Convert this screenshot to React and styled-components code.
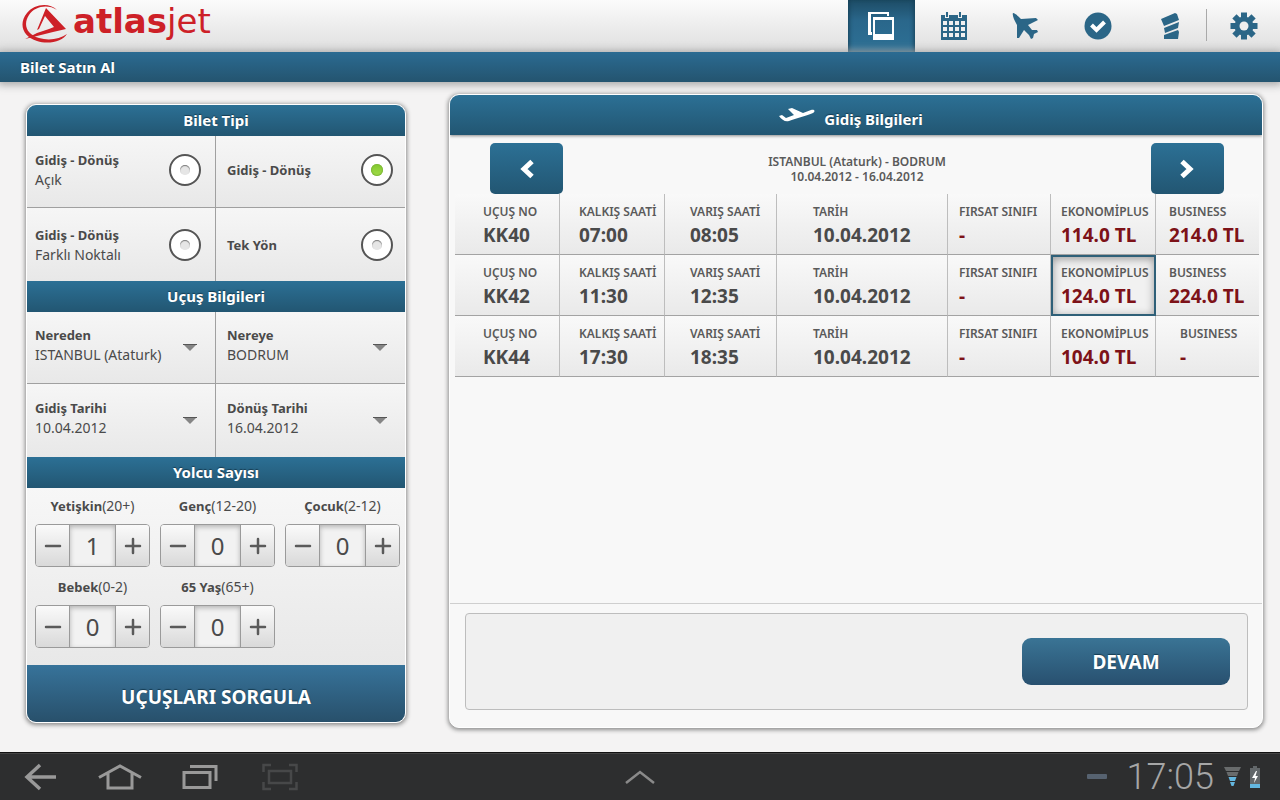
import React, { useState } from 'react';
import styled, { createGlobalStyle, css } from 'styled-components';

const GlobalStyle = createGlobalStyle`
  * { box-sizing: border-box; }
  body {
    margin: 0;
    background: #f4f3f3;
    color: #4a4a4a;
    font-family: 'Noto Sans', 'Open Sans', sans-serif;
    font-size: 14px;
  }
  button, input, select { font: inherit; color: inherit; }
  h1, h2, p { margin: 0; }
`;

const blue = 'linear-gradient(#2c7095, #225672)';

const Page = styled.div`
  min-height: 100vh;
  display: flex;
  flex-direction: column;
`;

const Header = styled.header`
  height: 52px;
  display: flex;
  justify-content: space-between;
  background: linear-gradient(#fbfbfb, #dfdfdf);
`;

const Logo = styled.a`
  display: flex;
  align-items: flex-start;
  padding-left: 20px;
  color: #cd2027;
  text-decoration: none;
`;

const LogoText = styled.span`
  font-family: 'DejaVu Sans', sans-serif;
  font-size: 34px;
  line-height: 42px;
  padding-left: 3px;
`;

const Tabs = styled.nav`
  display: flex;
`;

const Tab = styled.button`
  width: 72px;
  padding: 0;
  border: 0;
  display: flex;
  align-items: center;
  justify-content: center;
  background: none;
  color: #2b6687;
  ${(p) => p.$active && css`
    width: 67px;
    margin-right: 3px;
    color: #fff;
    background: linear-gradient(#1d4c66, #2a678b 40%, #2d7095);
    box-shadow: inset 3px 0 4px -2px #163f55, inset -3px 0 4px -2px #163f55;
  `}
`;

const TabDivider = styled.span`
  width: 1px;
  height: 32px;
  margin: 9px 1px 0 0;
  background: #a9a9a9;
`;

const TitleBar = styled.div`
  height: 30px;
  padding-left: 20px;
  background: linear-gradient(#2b6b92, #24546f);
  box-shadow: 0 1px 8px 2px #a8a8a8;
`;

const PageTitle = styled.h1`
  color: #fff;
  font-size: 15px;
  line-height: 31px;
  text-shadow: 0 -1px 1px #163c52;
`;

const Main = styled.main`
  flex: 1;
  display: flex;
  gap: 43px;
  padding: 12px 17px 24px 26px;
`;

const panel = css`
  border: 1px solid #fff;
  border-radius: 10px;
  overflow: hidden;
  background: #f8f8f8;
  box-shadow: 0 1px 4px 1px #8c8c8c;
`;

const SearchPanel = styled.form`
  ${panel}
  flex: 0 0 380px;
  align-self: flex-start;
  margin-top: 10px;
`;

const ResultsPanel = styled.section`
  ${panel}
  flex: 1;
  display: flex;
  flex-direction: column;
`;

const SectionTitle = styled.h2`
  height: 31px;
  background: ${blue};
  color: #fff;
  font-size: 15px;
  line-height: 31px;
  text-align: center;
  text-shadow: 0 -1px 1px #163c52;
`;

const OptionGrid = styled.div`
  display: grid;
  grid-template-columns: 1fr 1fr;
  grid-template-rows: 72px 73px;
`;

const Cell = styled.label`
  display: flex;
  align-items: center;
  justify-content: space-between;
  padding: 0 ${(p) => (p.$select ? 18 : 14)}px 0 8px;
  background: linear-gradient(#f6f6f6, #e8e8e8);
  border-right: 1px solid #a0a0a0;
  &:nth-child(even) {
    padding-left: 11px;
    padding-right: ${(p) => (p.$select ? 18 : 12)}px;
    border-right: 0;
  }
  &:nth-child(-n + 2) {
    padding-bottom: ${(p) => (p.$select ? 0 : 4)}px;
    border-bottom: 1px solid #a0a0a0;
  }
`;

const CellText = styled.span`
  display: flex;
  flex-direction: column;
  line-height: 20px;
  padding-bottom: ${(p) => (p.$select ? 5 : 0)}px;
`;

const CellLabel = styled.span`
  font-size: 13px;
  font-weight: 700;
`;

const Radio = styled.input`
  appearance: none;
  width: 32px;
  height: 32px;
  margin: 0;
  border: 2px solid #555;
  border-radius: 50%;
  display: grid;
  place-items: center;
  background: #fff;
  &::before {
    content: '';
    width: 10px;
    height: 10px;
    border-radius: 50%;
    background: #e6e6e6;
    box-shadow: inset 0 1px 1px #777;
  }
  &:checked::before {
    width: 12px;
    height: 12px;
    background: linear-gradient(#82c92e, #a2dc4a);
    box-shadow: inset 0 0 1px 1px #7fb83a;
  }
`;

const Select = styled.select`
  appearance: none;
  height: 20px;
  width: 144px;
  padding: 0;
  border: 0;
  background: none;
  line-height: 20px;
`;

const Passengers = styled.div`
  height: 177px;
  display: grid;
  grid-template-columns: repeat(3, 115px);
  justify-content: space-between;
  align-content: start;
  gap: 10px;
  padding: 8px 6px 0 8px;
  background: linear-gradient(#f7f7f7, #e8e8e8);
`;

const Passenger = styled.div`
  display: flex;
  flex-direction: column;
  gap: 8px;
`;

const PassengerLabel = styled.label`
  line-height: 20px;
  text-align: center;
  white-space: nowrap;
`;

const Strong = styled.b`
  font-size: 13px;
`;

const Stepper = styled.div`
  height: 43px;
  display: flex;
  border: 1px solid #9a9a9a;
  border-radius: 4px;
  overflow: hidden;
`;

const StepButton = styled.button`
  width: 33px;
  padding: 0;
  border: 0;
  display: flex;
  align-items: center;
  justify-content: center;
  background: linear-gradient(#fafafa, #d9d9d9);
`;

const Count = styled.input`
  flex: 1;
  min-width: 0;
  padding: 0;
  border: 0;
  border-left: 1px solid #9a9a9a;
  border-right: 1px solid #9a9a9a;
  text-align: center;
  font-size: 24px;
  background: #f2f2f2;
  box-shadow: inset 0 2px 5px #b5b5b5;
`;

const SearchButton = styled.button`
  display: block;
  width: 100%;
  height: 57px;
  padding: 6px 0 0;
  border: 0;
  background: linear-gradient(#37739a, #28506b);
  color: #fff;
  font-size: 19px;
  font-weight: 700;
  text-shadow: 0 -1px 1px #163c52;
`;

const ResultsTitle = styled.h2`
  height: 40px;
  display: flex;
  justify-content: center;
  gap: 9px;
  padding-right: 10px;
  background: ${blue};
  color: #fff;
  font-size: 15px;
  line-height: 48px;
  text-shadow: 0 -1px 1px #163c52;
  box-shadow: 0 1px 3px #888;
`;

const RouteBar = styled.div`
  display: flex;
  justify-content: space-between;
  align-items: center;
  padding: 8px 38px 0 40px;
`;

const Route = styled.div`
  color: #5a5a5a;
  font-size: 12px;
  font-weight: 600;
  line-height: 15px;
  text-align: center;
`;

const RouteLine = styled.p`
  height: 15px;
`;

const ArrowButton = styled.button`
  width: 73px;
  height: 51px;
  padding: 0;
  border: 0;
  border-radius: 5px;
  display: flex;
  align-items: center;
  justify-content: center;
  background: ${blue};
  color: #fff;
`;

const TableArea = styled.div`
  flex: 1;
  padding: 0 3px 0 5px;
  border-bottom: 1px solid #cfcfcf;
`;

const FlightTable = styled.table`
  width: 100%;
  table-layout: fixed;
  border-collapse: separate;
  border-spacing: 0;
`;

const Col = styled.col`
  width: ${(p) => (p.$width ? `${p.$width}px` : 'auto')};
`;

const FlightRow = styled.tr`
  height: 61px;
  background: linear-gradient(#f9f9f9, #e9e9e9);
`;

const FlightCell = styled.td`
  padding: ${(p) => (p.$fare ? 0 : 2)}px 0 0 ${(p) => p.$indent}px;
  border-right: 1px solid #bdbdbd;
  border-bottom: 1px solid #a3a3a3;
  white-space: nowrap;
  &:last-child { border-right: 0; }
  ${(p) => p.$selected && css`
    padding-left: 0;
    border: 0;
  `}
`;

const Fare = styled.button`
  display: block;
  width: 100%;
  height: 60px;
  padding: 2px 0 0;
  border: 0;
  background: none;
  text-align: left;
  color: #7d1218;
  ${(p) => p.$selected && css`
    height: 61px;
    padding: 1px 0 0 8px;
    border: 2px solid #2f6078;
    background: #f1f1f1;
    box-shadow: inset 0 2px 8px #999;
  `}
`;

const Caption = styled.span`
  display: block;
  color: #5a5a5a;
  font-size: 12px;
  font-weight: 600;
  line-height: 20px;
`;

const Value = styled.span`
  display: block;
  font-size: 19px;
  font-weight: 700;
  line-height: 26px;
`;

const ActionBox = styled.div`
  display: flex;
  justify-content: flex-end;
  align-items: center;
  height: 97px;
  margin: 9px 14px 17px 15px;
  padding-right: 17px;
  border: 1px solid #bdbdbd;
  border-radius: 4px;
  background: #f0f0f0;
`;

const ContinueButton = styled.button`
  width: 208px;
  height: 47px;
  border: 0;
  border-radius: 9px;
  background: linear-gradient(#3a7495, #28506f);
  color: #fff;
  font-size: 19px;
  font-weight: 700;
  text-shadow: 0 -1px 1px #163c52;
`;

const SystemBar = styled.footer`
  height: 48px;
  display: grid;
  grid-template-columns: 1fr auto 1fr;
  align-items: center;
  border-top: 1px solid #111;
  background: #2d2e2f;
  box-shadow: inset 0 1px 0 #444;
`;

const SystemGroup = styled.div`
  display: flex;
  align-items: center;
  justify-content: ${(p) => (p.$end ? 'flex-end' : 'flex-start')};
  padding-right: ${(p) => (p.$end ? 20 : 0)}px;
`;

const SystemButton = styled.button`
  width: 80px;
  height: 46px;
  padding: 0;
  border: 0;
  display: flex;
  align-items: center;
  justify-content: center;
  background: none;
`;

const Clock = styled.time`
  padding: 0 10px 0 20px;
  color: #a6a6a6;
  font-family: Roboto, sans-serif;
  font-size: 36px;
  font-weight: 300;
  line-height: 44px;
`;

const StatusIcons = styled.span`
  display: flex;
  align-items: center;
  gap: 9px;
`;

function LogoMark() {
  return (
    <svg width="50" height="46" viewBox="0 0 50 46" aria-hidden="true">
      <path d="M37 10C29 2 14 4 7 13C-2 24 3 37 17 41C29 45 43 41 47 34C40 39 29 41 19 38C6 34 3 24 9 15C15 6 28 4 37 10Z" fill="#cd2027" />
      <path fillRule="evenodd" d="M26 8L46 29L33 32L5 39L17 33L29 29L34 27L25 16L19 29L17 30Z" fill="#cd2027" />
    </svg>
  );
}

function WindowsIcon() {
  return (
    <svg width="27" height="29" viewBox="0 0 27 29" aria-hidden="true">
      <path fillRule="evenodd" fill="currentColor" d="M0 0H21V4H19V2H3V20H4V23H0Z" />
      <path fillRule="evenodd" fill="currentColor" d="M5 5H26V28H5ZM7 8V22H24V8Z" />
    </svg>
  );
}

function CalendarIcon() {
  return (
    <svg width="28" height="28" viewBox="0 0 28 28" aria-hidden="true">
      <path d="M1 3H27V28H1Z" fill="currentColor" />
      <path d="M7 0V6M20 0V6" stroke="#f2f2f2" strokeWidth="4" />
      <path d="M7 0V5M20 0V5" stroke="currentColor" strokeWidth="2" />
      {[9, 15, 21].map((y) => [3, 9, 15, 21].map((x) => (
        <rect key={`${x}-${y}`} x={x} y={y} width="4" height="4" fill="#f0f0f0" />
      )))}
    </svg>
  );
}

function PlaneIcon() {
  return (
    <svg width="28" height="28" viewBox="0 0 28 28" aria-hidden="true">
      <path fill="currentColor" d="M1 1C3 1 6 4 9 7L24 6L26 8L16 13L20 18L25 18L26 20L22 22L21 26L19 27L17 23L12 18L7 26L5 26L5 13C2 8 0 3 1 1Z" />
    </svg>
  );
}

function CheckIcon() {
  return (
    <svg width="28" height="28" viewBox="0 0 28 28" aria-hidden="true">
      <circle cx="14" cy="14" r="13.5" fill="currentColor" />
      <path d="M7.500 13L12.500 18L20.500 10" fill="none" stroke="#fff" strokeWidth="4" />
    </svg>
  );
}

function TicketsIcon() {
  return (
    <svg width="20" height="28" viewBox="0 0 20 28" aria-hidden="true">
      <path fill="currentColor" d="M1 7L15 1L17 2L19 8L4 14ZM4 16L19 10L18 16L5 21ZM4 23L18 18L19 20L18 27L4 27Z" />
    </svg>
  );
}

function GearIcon() {
  return (
    <svg width="28" height="28" viewBox="-14 -14 28 28" aria-hidden="true">
      {[0, 45, 90, 135].map((a) => (
        <rect key={a} x="-3" y="-13.5" width="6" height="27" fill="currentColor" transform={`rotate(${a})`} />
      ))}
      <circle r="9.5" fill="currentColor" />
      <circle r="4.5" fill="#eee" />
    </svg>
  );
}

function TakeoffIcon() {
  return (
    <svg width="36" height="40" viewBox="0 0 36 40" aria-hidden="true">
      <path fill="#fff" d="M0 21L3 20L7 23L15 20L9 14L13 13L24 18L32 15C35 14 37 16 34 18C28 21 17 23 10 26C6 27 3 25 0 21Z" />
    </svg>
  );
}

function Chevron({ right }) {
  return (
    <svg width="16" height="20" viewBox="0 0 16 20" fill="none" stroke="currentColor" strokeWidth="5" aria-hidden="true">
      <path d={right ? 'M3 2.500L11 10L3 17.500' : 'M13 2.500L5 10L13 17.500'} />
    </svg>
  );
}

function DropArrow() {
  return (
    <svg width="14" height="8" viewBox="0 0 14 8" aria-hidden="true">
      <path d="M0 0H14L7 7Z" fill="#858585" />
      <path d="M0 0.5H14" stroke="#555" />
    </svg>
  );
}

function Sign({ plus }) {
  return (
    <svg width="18" height="18" viewBox="0 0 18 18" stroke="#5a5a5a" strokeWidth="2.500" strokeLinecap="round" aria-hidden="true">
      <path d={plus ? 'M2 9H16M9 2V16' : 'M2 9H16'} />
    </svg>
  );
}

const tabs = [
  ['Bilet', WindowsIcon],
  ['Takvim', CalendarIcon],
  ['Uçuşlar', PlaneIcon],
  ['Check-in', CheckIcon],
  ['Biletlerim', TicketsIcon],
];

const ticketTypes = [
  ['Gidiş - Dönüş', 'Açık'],
  ['Gidiş - Dönüş', ''],
  ['Gidiş - Dönüş', 'Farklı Noktalı'],
  ['Tek Yön', ''],
];

const fields = [
  ['Nereden', 'ISTANBUL (Ataturk)'],
  ['Nereye', 'BODRUM'],
  ['Gidiş Tarihi', '10.04.2012'],
  ['Dönüş Tarihi', '16.04.2012'],
];

const passengerTypes = [
  ['Yetişkin', '(20+)', 1],
  ['Genç', '(12-20)', 0],
  ['Çocuk', '(2-12)', 0],
  ['Bebek', '(0-2)', 0],
  ['65 Yaş', '(65+)', 0],
];

const columns = [
  { label: 'UÇUŞ NO', width: 105, indent: 28 },
  { label: 'KALKIŞ SAATİ', width: 105, indent: 19 },
  { label: 'VARIŞ SAATİ', width: 112, indent: 25 },
  { label: 'TARİH', indent: 36 },
  { label: 'FIRSAT SINIFI', width: 103, indent: 11, fare: true },
  { label: 'EKONOMİPLUS', width: 105, indent: 10, fare: true },
  { label: 'BUSINESS', width: 103, indent: 13, emptyIndent: 24, fare: true },
];

const flights = [
  ['KK40', '07:00', '08:05', '10.04.2012', '-', '114.0 TL', '214.0 TL'],
  ['KK42', '11:30', '12:35', '10.04.2012', '-', '124.0 TL', '224.0 TL'],
  ['KK44', '17:30', '18:35', '10.04.2012', '-', '104.0 TL', '-'],
];

function SearchForm() {
  const [type, setType] = useState(1);
  const [counts, setCounts] = useState(passengerTypes.map((p) => p[2]));
  const step = (i, d) => setCounts(counts.map((c, k) => (k === i ? Math.max(0, c + d) : c)));

  return (
    <SearchPanel onSubmit={(e) => e.preventDefault()}>
      <SectionTitle>Bilet Tipi</SectionTitle>
      <OptionGrid>
        {ticketTypes.map(([title, detail], i) => (
          <Cell key={i}>
            <CellText>
              <CellLabel>{title}</CellLabel>
              {detail}
            </CellText>
            <Radio type="radio" name="ticket" checked={type === i} onChange={() => setType(i)} />
          </Cell>
        ))}
      </OptionGrid>
      <SectionTitle>Uçuş Bilgileri</SectionTitle>
      <OptionGrid>
        {fields.map(([label, value]) => (
          <Cell key={label} $select>
            <CellText $select>
              <CellLabel>{label}</CellLabel>
              <Select>
                <option>{value}</option>
              </Select>
            </CellText>
            <DropArrow />
          </Cell>
        ))}
      </OptionGrid>
      <SectionTitle>Yolcu Sayısı</SectionTitle>
      <Passengers>
        {passengerTypes.map(([name, age], i) => (
          <Passenger key={name}>
            <PassengerLabel htmlFor={`count-${i}`}>
              <Strong>{name}</Strong>{age}
            </PassengerLabel>
            <Stepper>
              <StepButton type="button" aria-label={`${name} azalt`} onClick={() => step(i, -1)}><Sign /></StepButton>
              <Count id={`count-${i}`} value={counts[i]} readOnly />
              <StepButton type="button" aria-label={`${name} artır`} onClick={() => step(i, 1)}><Sign plus /></StepButton>
            </Stepper>
          </Passenger>
        ))}
      </Passengers>
      <SearchButton type="submit">UÇUŞLARI SORGULA</SearchButton>
    </SearchPanel>
  );
}

function Results() {
  const [selected, setSelected] = useState('1-5');

  return (
    <ResultsPanel>
      <ResultsTitle><TakeoffIcon />Gidiş Bilgileri</ResultsTitle>
      <RouteBar>
        <ArrowButton aria-label="Önceki gün"><Chevron /></ArrowButton>
        <Route>
          <RouteLine>ISTANBUL (Ataturk) - BODRUM</RouteLine>
          <RouteLine>10.04.2012 - 16.04.2012</RouteLine>
        </Route>
        <ArrowButton aria-label="Sonraki gün"><Chevron right /></ArrowButton>
      </RouteBar>
      <TableArea>
        <FlightTable>
          <colgroup>
            {columns.map((c) => <Col key={c.label} $width={c.width} />)}
          </colgroup>
          <tbody>
            {flights.map((flight, r) => (
              <FlightRow key={flight[0]}>
                {columns.map((c, i) => {
                  const id = `${r}-${i}`;
                  const on = selected === id;
                  const indent = flight[i] === '-' && c.emptyIndent ? c.emptyIndent : c.indent;
                  const content = (
                    <>
                      <Caption>{c.label}</Caption>
                      <Value>{flight[i]}</Value>
                    </>
                  );
                  return (
                    <FlightCell key={c.label} $indent={indent} $fare={c.fare} $selected={on}>
                      {c.fare
                        ? <Fare $selected={on} aria-pressed={on} onClick={() => setSelected(id)}>{content}</Fare>
                        : content}
                    </FlightCell>
                  );
                })}
              </FlightRow>
            ))}
          </tbody>
        </FlightTable>
      </TableArea>
      <ActionBox>
        <ContinueButton>DEVAM</ContinueButton>
      </ActionBox>
    </ResultsPanel>
  );
}

export default function App() {
  return (
    <Page>
      <GlobalStyle />
      <Header>
        <Logo href="#">
          <LogoMark />
          <LogoText><b>atlas</b>jet</LogoText>
        </Logo>
        <Tabs>
          {tabs.map(([name, Icon], i) => (
            <Tab key={name} aria-label={name} $active={i === 0}><Icon /></Tab>
          ))}
          <TabDivider />
          <Tab aria-label="Ayarlar"><GearIcon /></Tab>
        </Tabs>
      </Header>
      <TitleBar><PageTitle>Bilet Satın Al</PageTitle></TitleBar>
      <Main>
        <SearchForm />
        <Results />
      </Main>
      <SystemBar>
        <SystemGroup>
          <SystemButton aria-label="Geri">
            <svg width="32" height="28" viewBox="0 0 32 28" fill="none" stroke="#999" strokeWidth="3.500">
              <path d="M16 2L3 14L16 26M3 14H32" />
            </svg>
          </SystemButton>
          <SystemButton aria-label="Ana ekran">
            <svg width="44" height="28" viewBox="0 0 44 28" fill="none" stroke="#999" strokeWidth="3">
              <path d="M1 14.500L22 3L43 14.500M10 10V25H34V10" />
            </svg>
          </SystemButton>
          <SystemButton aria-label="Son uygulamalar">
            <svg width="36" height="26" viewBox="0 0 36 26" fill="none" stroke="#999" strokeWidth="3">
              <path d="M2 8.500H28V23.500H2ZM8 2.500H34V17" />
            </svg>
          </SystemButton>
          <SystemButton aria-label="Ekran görüntüsü">
            <svg width="36" height="28" viewBox="0 0 36 28" fill="none" stroke="#474849" strokeWidth="2.500">
              <path d="M7 8H29V20H7ZM1.500 9V2H9M27 2H34.500V9M34.500 19V26H27M9 26H1.500V19" />
            </svg>
          </SystemButton>
        </SystemGroup>
        <SystemButton aria-label="Menü">
          <svg width="30" height="16" viewBox="0 0 30 16" fill="none" stroke="#8a8a8a" strokeWidth="2.500">
            <path d="M1 14L15 3L29 14" />
          </svg>
        </SystemButton>
        <SystemGroup $end>
          <svg width="20" height="5" viewBox="0 0 20 5" aria-hidden="true">
            <rect width="20" height="5" rx="1" fill="#566270" />
          </svg>
          <Clock>17:05</Clock>
          <StatusIcons>
            <svg width="17" height="20" viewBox="0 0 17 20" aria-hidden="true">
              <path d="M0 0H17L15 4H2Z M2.500 5H14.500L13 9H4Z" fill="#686b6c" />
              <path d="M4.500 10H12.500L11 14H6Z M6 15H11L9.500 19H7.500Z" fill="#64b7e0" />
            </svg>
            <svg width="10" height="22" viewBox="0 0 10 22" aria-hidden="true">
              <path d="M3 0H7V2H10V18H0V2H3Z" fill="#62676a" />
              <path d="M0 18H10V22H0Z" fill="#64b7e0" />
              <path d="M6 5L2 12H5L4 17L8 10H5.500L7 5Z" fill="#fff" />
            </svg>
          </StatusIcons>
        </SystemGroup>
      </SystemBar>
    </Page>
  );
}
